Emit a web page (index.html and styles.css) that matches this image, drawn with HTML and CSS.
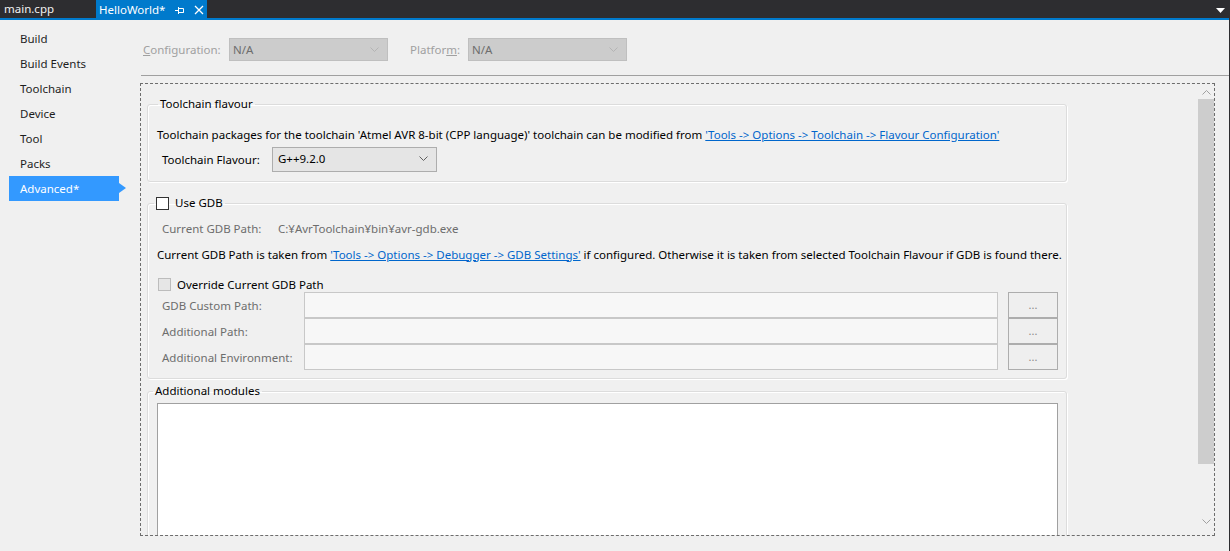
FILE: index.html
```html
<!DOCTYPE html>
<html>
<head>
<meta charset="utf-8">
<link rel="stylesheet" href="styles.css">
</head>
<body>
<div class="tabbar">
  <div class="tab">main.cpp</div>
  <div class="tab active">HelloWorld*
    <svg class="pin" width="10" height="9" viewBox="0 0 10 9"><path d="M0 4.5H3M3.5 1V8M3.5 2.5H8.5V6.5H3.5M5 6.5H8.5" fill="none" stroke="#fff" stroke-width="1"/></svg>
    <svg class="close" width="10" height="10" viewBox="0 0 10 10"><path d="M1 1L9 9M9 1L1 9" stroke="#fff" stroke-width="1.3"/></svg>
  </div>
  <div class="tabfill"></div>
  <svg class="drop" width="9" height="5" viewBox="0 0 9 5"><path d="M0 0H9L4.5 5Z" fill="#fff"/></svg>
</div>
<div class="main">
  <nav class="nav">
    <div class="navitem">Build</div>
    <div class="navitem">Build Events</div>
    <div class="navitem">Toolchain</div>
    <div class="navitem">Device</div>
    <div class="navitem">Tool</div>
    <div class="navitem">Packs</div>
    <div class="navitem selected">Advanced*</div>
  </nav>
  <div class="content">
    <div class="configrow">
      <span class="cfglabel"><u>C</u>onfiguration:</span>
      <div class="dcombo cfgcombo"><span>N/A</span><svg width="9" height="5" viewBox="0 0 9 5"><path d="M0.5 0.5L4.5 4.5L8.5 0.5" fill="none" stroke="#b4b4b4"/></svg></div>
      <span class="cfglabel plat">Platfor<u>m</u>:</span>
      <div class="dcombo cfgcombo"><span>N/A</span><svg width="9" height="5" viewBox="0 0 9 5"><path d="M0.5 0.5L4.5 4.5L8.5 0.5" fill="none" stroke="#b4b4b4"/></svg></div>
    </div>
    <div class="sep"></div>
    <div class="scrollbox">
      <div class="pane">
        <fieldset class="group g1">
          <legend>Toolchain flavour</legend>
          <div class="line">Toolchain packages for the toolchain 'Atmel AVR 8-bit (CPP language)' toolchain can be modified from <a class="link">'Tools -&gt; Options -&gt; Toolchain -&gt; Flavour Configuration'</a></div>
          <div class="flavrow">
            <span class="flavlabel">Toolchain Flavour:</span>
            <div class="combo"><span>G++9.2.0</span><svg width="9" height="5" viewBox="0 0 9 5"><path d="M0.5 0.5L4.5 4.5L8.5 0.5" fill="none" stroke="#606060"/></svg></div>
          </div>
        </fieldset>
        <fieldset class="group g2">
          <legend><span class="check"></span>Use GDB</legend>
          <div class="gline first"><span class="glabel dim">Current GDB Path:</span><span class="dim">C:¥AvrToolchain¥bin¥avr-gdb.exe</span></div>
          <div class="gline">Current GDB Path is taken from&nbsp;<a class="link">'Tools -&gt; Options -&gt; Debugger -&gt; GDB Settings'</a>&nbsp;if configured. Otherwise it is taken from selected Toolchain Flavour if GDB is found there.</div>
          <div class="override"><span class="check disabled"></span>Override Current GDB Path</div>
          <div class="frow"><span class="flabel">GDB Custom Path:</span><div class="tbox"></div><div class="btn">...</div></div>
          <div class="frow"><span class="flabel">Additional Path:</span><div class="tbox"></div><div class="btn">...</div></div>
          <div class="frow"><span class="flabel">Additional Environment:</span><div class="tbox"></div><div class="btn">...</div></div>
        </fieldset>
        <fieldset class="group g3">
          <legend>Additional modules</legend>
          <div class="textarea"></div>
        </fieldset>
      </div>
      <div class="vscroll">
        <div class="arrow"><svg width="9" height="5" viewBox="0 0 9 5"><path d="M0.5 4.5L4.5 0.5L8.5 4.5" fill="none" stroke="#a0a0a0"/></svg></div>
        <div class="thumb"></div>
        <div class="track"></div>
        <div class="arrow down"><svg width="9" height="5" viewBox="0 0 9 5"><path d="M0.5 0.5L4.5 4.5L8.5 0.5" fill="none" stroke="#a0a0a0"/></svg></div>
      </div>
    </div>
  </div>
</div>
</body>
</html>
```
FILE: styles.css
```css
* { box-sizing: border-box; }
html, body { margin: 0; padding: 0; }
body {
  width: 1230px;
  height: 551px;
  overflow: hidden;
  background: #f0f0f0;
  font-family: "Noto Sans", "Liberation Sans", sans-serif;
  font-size: 11.5px;
  color: #000;
  border-right: 1px solid #2d2d30;
}
.tabbar {
  display: flex;
  height: 20px;
  background: #2d2d30;
  border-bottom: 2px solid #007acc;
  align-items: stretch;
  position: relative;
}
.tab {
  width: 96px;
  padding-left: 4px;
  color: #f1f1f1;
  line-height: 18px;
  display: flex;
  align-items: center;
}
.tab.active {
  width: 111px;
  background: #007acc;
  padding-left: 3px;
  margin-bottom: -2px;
  color: #fff;
}
.pin { margin-left: 10px; }
.close { margin-left: 9px; }
.tabfill { flex: 1; }
.drop { position: absolute; right: 4px; top: 8px; }

.main { display: flex; height: 531px; }
.nav { width: 140px; padding-top: 6px; }
.navitem {
  height: 25px;
  line-height: 25px;
  padding-left: 11px;
  margin-left: 9px;
  width: 110px;
  color: #1e1e1e;
  position: relative;
}
.navitem.selected {
  background: #3399ff;
  color: #fff;
}
.navitem.selected::after {
  content: "";
  position: absolute;
  left: 110px;
  top: 7px;
  border-left: 7px solid #3399ff;
  border-top: 5px solid transparent;
  border-bottom: 5px solid transparent;
}
.content { width: 1089px; }
.configrow {
  display: flex;
  align-items: center;
  padding-top: 18px;
  padding-left: 3px;
  height: 41px;
}
.cfglabel { color: #a0a0a0; width: 86px; }
.cfglabel.plat { width: 58px; margin-left: 22px; }
.dcombo {
  width: 159px;
  height: 23px;
  background: #cccccc;
  border: 1px solid #bfbfbf;
  color: #6d6d6d;
  display: flex;
  align-items: center;
  justify-content: space-between;
  padding: 0 8px 0 3px;
}
.sep {
  margin-top: 14px;
  margin-left: 1px;
  height: 1px;
  background: #a0a0a0;
}
.scrollbox {
  margin-top: 7px;
  width: 1075px;
  height: 453px;
  border: 1px dashed #6d6d6d;
  display: flex;
  overflow: hidden;
}
.pane { flex: 1; padding-left: 6px; overflow: hidden; }
.group {
  margin: 0;
  width: 920px;
  min-width: 0;
  border: 1px solid #dcdcdc;
  border-radius: 3px;
  box-shadow: inset 1px 1px 0 #fff, 1px 1px 0 #fff;
  padding: 0 8px 0 9px;
}
.group legend {
  padding: 0 2px;
  line-height: 16px;
  height: 16px;
  display: flex;
  align-items: center;
}
.g1 { margin-top: 12px; padding-top: 15px; padding-bottom: 9px; }
.g1 legend { margin-left: 1px; }
.line { line-height: 16px; white-space: nowrap; }
.link { color: #0066cc; text-decoration: underline; }
.flavrow { display: flex; align-items: center; margin-top: 4px; padding-left: 5px; }
.flavlabel { width: 110px; }
.combo {
  width: 165px;
  height: 25px;
  background: #e5e5e5;
  border: 1px solid #adadad;
  display: flex;
  align-items: center;
  justify-content: space-between;
  padding: 0 8px 3px 5px;
}
.g2 { margin-top: 13px; padding-top: 4px; padding-bottom: 8px; }
.g2 legend { margin-left: -3px; }
.check {
  width: 13px;
  height: 13px;
  border: 1px solid #333;
  background: #fff;
  margin-right: 6px;
  display: inline-block;
}
.check.disabled { background: #e6e6e6; border-color: #bcbcbc; }
.gline { height: 26px; display: flex; align-items: center; white-space: nowrap; }
.gline.first { padding-left: 5px; }
.glabel { width: 116px; }
.dim { color: #6d6d6d; }
.override { display: flex; align-items: center; height: 16px; margin-top: 9px; padding-left: 1px; }
.frow { display: flex; height: 26px; align-items: stretch; }
.flabel { width: 147px; padding-left: 5px; color: #6d6d6d; display: flex; align-items: center; }
.tbox {
  flex: 1;
  background: #f7f7f7;
  border: 1px solid #c8c8c8;
  height: 26px;
}
.btn {
  width: 50px;
  margin-left: 10px;
  border: 1px solid #adadad;
  background: #efefef;
  color: #8a8a8a;
  text-align: center;
  line-height: 24px;
  font-size: 11px;
}
.g3 { margin-top: 4px; padding-top: 4px; }
.g3 legend { margin-left: -4px; }
.textarea {
  height: 200px;
  background: #fff;
  border: 1px solid #a0a0a0;
}
.vscroll { width: 16px; display: flex; flex-direction: column; }
.arrow { height: 15px; display: flex; justify-content: center; align-items: center; padding-top: 2px; }
.arrow.down { height: 21px; padding-top: 0; padding-bottom: 6px; }
.thumb { height: 365px; background: #cdcdcd; }
.track { flex: 1; }
```
